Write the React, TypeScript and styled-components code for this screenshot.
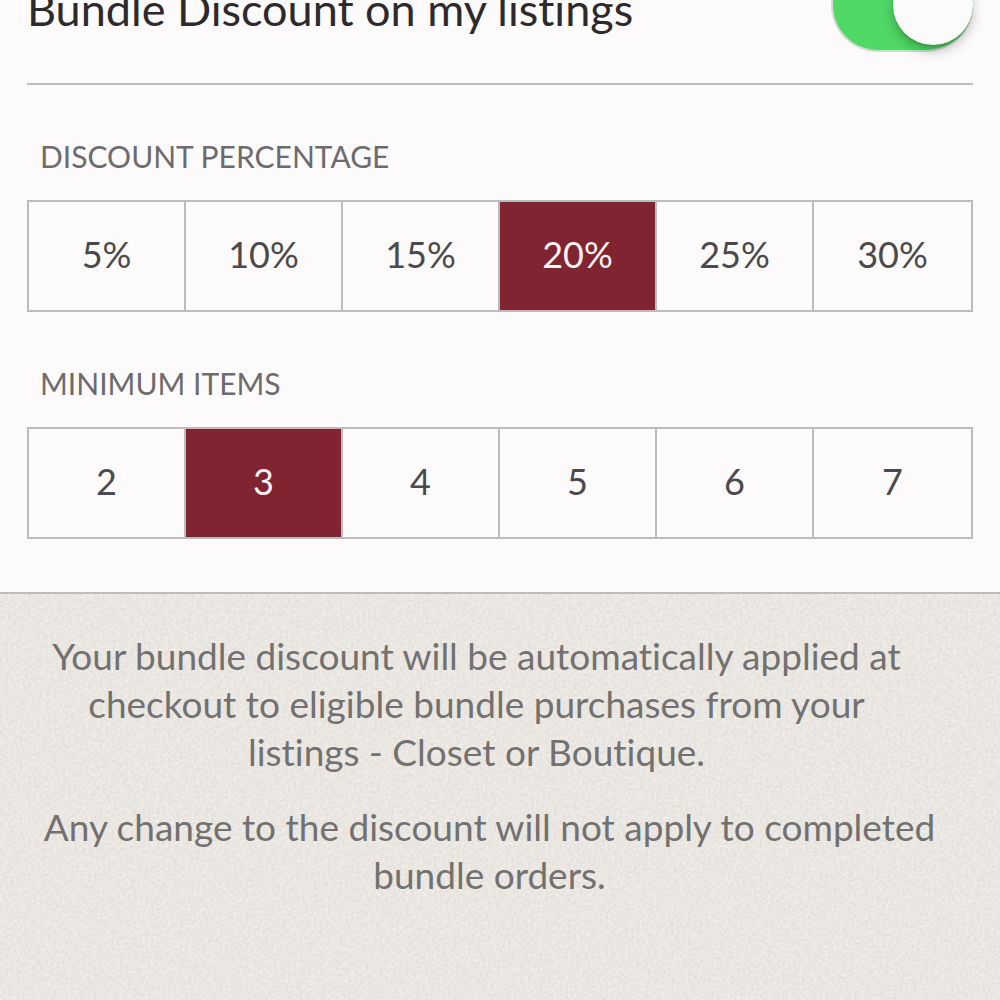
import React, { useState } from "react";
import styled, { createGlobalStyle } from "styled-components";

const GlobalStyle = createGlobalStyle`
  * { box-sizing: border-box; }
  html, body, #root { height: 100%; }
  body {
    margin: 0;
    background: #e9e6e1;
    font-family: Lato, "Open Sans", "Liberation Sans", sans-serif;
    font-variant-ligatures: none;
  }
`;

const Page = styled.main`
  min-height: 100%;
  display: flex;
  flex-direction: column;
  overflow: hidden;
`;

const Panel = styled.section`
  padding: 0 27px 53px;
  background: #fcfafb;
  border-bottom: 2px solid #bfbcb9;
`;

/* The row is scrolled partly past the top of the window. */
const SettingRow = styled.div`
  display: flex;
  align-items: center;
  justify-content: space-between;
  height: 158px;
  margin-top: -73px;
  border-bottom: 2px solid #bdbbbb;
`;

const SettingLabel = styled.label`
  padding-top: 8px;
  font-size: 45px;
  line-height: 52px;
  color: #2c2a2c;
`;

const Switch = styled.input`
  appearance: none;
  flex: none;
  display: flex;
  align-items: center;
  width: 142px;
  height: 94px;
  margin: 0;
  border: 2px solid #cfdccf;
  border-radius: 47px;
  background: #fcfafb;
  cursor: pointer;

  &::before {
    content: "";
    width: 80px;
    height: 80px;
    border-radius: 50%;
    background: #fcfbfc;
    box-shadow: 0 6px 12px rgba(0, 0, 0, 0.24), 0 2px 2px rgba(0, 0, 0, 0.12);
  }

  &:checked {
    justify-content: flex-end;
    border-right-width: 0;
    background: #4fd865;
  }
`;

const Group = styled.fieldset`
  min-width: 0;
  margin: 0;
  padding: 53px 0 0;
  border: 0;
`;

const GroupTitle = styled.legend`
  float: left;
  width: 100%;
  margin-bottom: 26px;
  padding: 0 13px;
  font-size: 30px;
  line-height: 36px;
  color: #6d6b6d;
`;

const Segments = styled.div`
  clear: both;
  display: grid;
  grid-template-columns: repeat(6, 1fr);
  height: 112px;
  border: 2px solid #bdbbbb;
`;

const Segment = styled.label`
  display: flex;
  align-items: center;
  justify-content: center;
  padding-bottom: 4px;
  font-size: 36px;
  line-height: 48px;
  color: #4b494b;
  cursor: pointer;

  &:not(:last-child) { border-right: 2px solid #bdbbbb; }

  &:has(input:checked) {
    background: #802431;
    color: #fcf2f4;
  }
`;

const SegmentInput = styled.input`
  appearance: none;
  width: 0;
  height: 0;
  margin: 0;
`;

const Notes = styled.section`
  position: relative;
  flex: 1;
  padding: 38px 48px 38px 27px;
  text-align: center;
`;

const PaperGrain = styled.svg`
  position: absolute;
  inset: 0;
  width: 100%;
  height: 100%;
`;

const Note = styled.p<{ $inset?: number }>`
  position: relative;
  margin: 0 ${(p) => p.$inset ?? 0}px 27px 0;
  font-size: 37px;
  line-height: 48px;
  color: #737170;
`;

function Choice({ title, name, options, initial }: {
  title: string;
  name: string;
  options: string[];
  initial: string;
}) {
  const [value, setValue] = useState(initial);
  return (
    <Group>
      <GroupTitle>{title}</GroupTitle>
      <Segments>
        {options.map((o) => (
          <Segment key={o}>
            <SegmentInput
              type="radio"
              name={name}
              value={o}
              checked={o === value}
              onChange={() => setValue(o)}
            />
            {o}
          </Segment>
        ))}
      </Segments>
    </Group>
  );
}

export default function App() {
  const [enabled, setEnabled] = useState(true);
  return (
    <Page>
      <GlobalStyle />
      <Panel>
        <SettingRow>
          <SettingLabel htmlFor="bundle-discount">Bundle Discount on my listings</SettingLabel>
          <Switch
            id="bundle-discount"
            type="checkbox"
            role="switch"
            checked={enabled}
            onChange={(e) => setEnabled(e.target.checked)}
          />
        </SettingRow>
        <Choice
          title="DISCOUNT PERCENTAGE"
          name="percentage"
          options={["5%", "10%", "15%", "20%", "25%", "30%"]}
          initial="20%"
        />
        <Choice
          title="MINIMUM ITEMS"
          name="minimum"
          options={["2", "3", "4", "5", "6", "7"]}
          initial="3"
        />
      </Panel>
      <Notes>
        <PaperGrain aria-hidden="true">
          <filter id="grain" x="0" y="0" width="100%" height="100%" colorInterpolationFilters="sRGB">
            <feTurbulence type="fractalNoise" baseFrequency="0.35" numOctaves="3" seed="4" />
            <feColorMatrix
              values="0.1 0 0 0 0.868
                      0.1 0 0 0 0.856
                      0.1 0 0 0 0.838
                      0 0 0 0 1"
            />
          </filter>
          <rect width="100%" height="100%" filter="url(#grain)" />
        </PaperGrain>
        <Note $inset={26}>
          Your bundle discount will be automatically applied at
          <br />
          checkout to eligible bundle purchases from your
          <br />
          listings - Closet or Boutique.
        </Note>
        <Note>
          Any change to the discount will not apply to completed
          <br />
          bundle orders.
        </Note>
      </Notes>
    </Page>
  );
}
